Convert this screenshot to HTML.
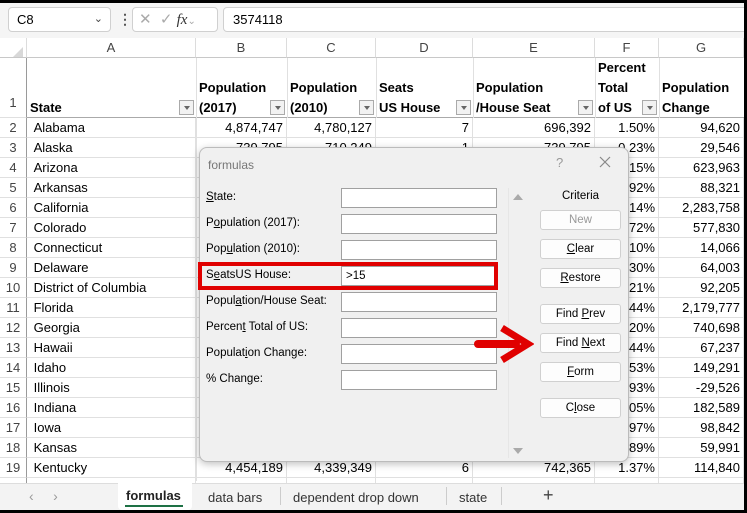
<!DOCTYPE html>
<html><head><meta charset="utf-8"><style>
*{box-sizing:border-box;margin:0;padding:0}
body{width:747px;height:513px;overflow:hidden;background:#000;font-family:"Liberation Sans",sans-serif;position:relative}
#w{position:absolute;left:0;top:3px;width:744px;height:507px;background:#fff;overflow:hidden}
.a{position:absolute}
.fb{left:0;top:0;width:744px;height:35px;background:#f5f5f5}
.box{background:#fff;border:1px solid #d0d0d0;border-radius:4px}
.ch{top:35px;height:20px;background:#fff;border-bottom:1px solid #c8c8c8;border-right:1px solid #dcdcdc;color:#444;font-size:13px;text-align:center;line-height:20px}
.rh{left:0;width:27px;text-align:center;color:#444;font-size:13px;border-bottom:1px solid #e0e0e0;border-right:1px solid #9a9a9a}
.row{position:absolute;left:27px;height:20px;width:717px;border-bottom:1px solid #e0e0e0;font-size:13px;line-height:20px}
.row span{position:absolute;top:0;height:20px;border-right:1px solid #e0e0e0;padding:0 3px;white-space:nowrap;overflow:hidden}
.r{text-align:right}
.hd{position:absolute;font-weight:bold;font-size:13px;line-height:20px;color:#000}
.dd{position:absolute;width:15px;height:15px;border:1px solid #aaa;background:#f2f2f2}
.dd:after{content:"";position:absolute;left:4px;top:5px;border-left:3px solid transparent;border-right:3px solid transparent;border-top:4px solid #666}
.dlg{left:199px;top:144px;width:430px;height:315px;background:#f0f0f0;border:1px solid #bbb;border-radius:8px;box-shadow:0 2px 8px rgba(0,0,0,.25);font-size:11.5px;color:#000}
.lb{position:absolute;left:6px}
.tb{position:absolute;left:141px;width:156px;height:20px;background:#fff;border:1px solid #a0a0a0}
.bt{position:absolute;left:340px;width:81px;height:20px;background:#fdfdfd;border:1px solid #d0d0d0;border-radius:3px;text-align:center;line-height:18px}
u{text-decoration:underline}
</style></head><body><div id="w">
<div class="a fb"></div>
<div class="a box" style="left:8px;top:4px;width:103px;height:25px;font-size:13px;line-height:23px;padding-left:8px">C8<span style="position:absolute;right:7px;color:#444;font-size:11px">&#8964;</span></div>
<div class="a" style="left:118px;top:8px;color:#555;font-size:14px;font-weight:bold">⋮</div>
<div class="a box" style="left:132px;top:4px;width:86px;height:25px;color:#aaa;font-size:15px;line-height:23px;padding-left:6px">✕ &nbsp;✓ <i style="color:#333;font-family:'Liberation Serif',serif">fx</i><span style="font-size:10px">&#8964;</span></div>
<div class="a box" style="left:223px;top:4px;width:530px;height:25px;font-size:13px;line-height:23px;padding-left:9px">3574118</div>
<div class="a ch" style="left:0;width:27px;background:#fff"></div>
<div class="a" style="left:13px;top:44px;border-left:10px solid transparent;border-bottom:10px solid #d8d8d8"></div>
<div class="a ch" style="left:27px;width:169px">A</div>
<div class="a ch" style="left:196px;width:91px">B</div>
<div class="a ch" style="left:287px;width:89px">C</div>
<div class="a ch" style="left:376px;width:97px">D</div>
<div class="a ch" style="left:473px;width:122px">E</div>
<div class="a ch" style="left:595px;width:64px">F</div>
<div class="a ch" style="left:659px;width:85px">G</div>
<div class="a rh" style="top:55px;height:60px;line-height:90px">1</div>
<div class="a" style="left:27px;top:55px;width:717px;height:60px;border-bottom:1px solid #aaa"></div>
<div class="a" style="left:196px;top:55px;height:423px;border-left:1px solid #e0e0e0"></div>
<div class="a" style="left:287px;top:55px;height:60px;border-left:1px solid #e0e0e0"></div>
<div class="a" style="left:376px;top:55px;height:60px;border-left:1px solid #e0e0e0"></div>
<div class="a" style="left:473px;top:55px;height:60px;border-left:1px solid #e0e0e0"></div>
<div class="a" style="left:595px;top:55px;height:60px;border-left:1px solid #e0e0e0"></div>
<div class="a" style="left:659px;top:55px;height:60px;border-left:1px solid #e0e0e0"></div>
<div class="hd" style="left:30px;top:95px">State</div><div class="dd" style="left:179px;top:97px"></div>
<div class="hd" style="left:199px;top:75px">Population<br>(2017)</div><div class="dd" style="left:270px;top:97px"></div>
<div class="hd" style="left:290px;top:75px">Population<br>(2010)</div><div class="dd" style="left:359px;top:97px"></div>
<div class="hd" style="left:379px;top:75px">Seats<br>US House</div><div class="dd" style="left:456px;top:97px"></div>
<div class="hd" style="left:476px;top:75px">Population<br>/House Seat</div><div class="dd" style="left:578px;top:97px"></div>
<div class="hd" style="left:598px;top:55px">Percent<br>Total<br>of US</div><div class="dd" style="left:642px;top:97px"></div>
<div class="hd" style="left:662px;top:75px">Population<br>Change</div>
<div id="rows"></div>
<script>
var d=[["Alabama","4,874,747","4,780,127","7","696,392","1.50%","94,620"],["Alaska","739,795","710,249","1","739,795","0.23%","29,546"],["Arizona","","","","","2.15%","623,963"],["Arkansas","","","","","0.92%","88,321"],["California","","","","","12.14%","2,283,758"],["Colorado","","","","","1.72%","577,830"],["Connecticut","","","","","1.10%","14,066"],["Delaware","","","","","0.30%","64,003"],["District of Columbia","","","","","0.21%","92,205"],["Florida","","","","","6.44%","2,179,777"],["Georgia","","","","","3.20%","740,698"],["Hawaii","","","","","0.44%","67,237"],["Idaho","","","","","0.53%","149,291"],["Illinois","","","","","3.93%","-29,526"],["Indiana","","","","","2.05%","182,589"],["Iowa","","","","","0.97%","98,842"],["Kansas","","","","","0.89%","59,991"],["Kentucky","4,454,189","4,339,349","6","742,365","1.37%","114,840"],["","","","","","",""]];
var L=[0,169,260,349,446,568,632],W=[169,91,89,97,122,64,85],h="";
d.forEach(function(r,i){var t=115+i*20;h+='<div class="a rh" style="top:'+t+'px;height:20px;line-height:20px">'+(i<18?i+2:'')+'</div><div class="row" style="top:'+t+'px">';
r.forEach(function(c,j){h+='<span class="'+(j?'r':'')+'" style="left:'+L[j]+'px;width:'+W[j]+'px">'+(j?c:'&nbsp;'+c)+'</span>'});h+='</div>'});
document.getElementById('rows').innerHTML=h;
</script>
<div class="a dlg">
<div class="a" style="left:8px;top:10px;color:#777;font-size:12px">formulas</div>
<div class="a" style="left:356px;top:7px;color:#999;font-size:13px">?</div>
<svg class="a" style="left:399px;top:8px" width="12" height="12"><path d="M1 1L11 11M11 1L1 11" stroke="#888" stroke-width="1.2"/></svg>
<div class="lb" style="top:43px"><u>S</u>tate:</div><div class="tb" style="top:40px"></div>
<div class="lb" style="top:69px">P<u>o</u>pulation (2017):</div><div class="tb" style="top:66px"></div>
<div class="lb" style="top:95px">Pop<u>u</u>lation (2010):</div><div class="tb" style="top:92px"></div>
<div class="lb" style="top:121px">S<u>e</u>atsUS House:</div><div class="tb" style="top:118px;padding-left:4px;line-height:18px">&gt;15</div>
<div class="lb" style="top:147px">Popul<u>a</u>tion/House Seat:</div><div class="tb" style="top:144px"></div>
<div class="lb" style="top:173px">Percen<u>t</u> Total of US:</div><div class="tb" style="top:170px"></div>
<div class="lb" style="top:199px">Populat<u>i</u>on Change:</div><div class="tb" style="top:196px"></div>
<div class="lb" style="top:225px">% Chan<u>g</u>e:</div><div class="tb" style="top:222px"></div>
<div class="a" style="left:-2px;top:114px;width:300px;height:28px;border:4px solid #e00000"></div>
<div class="a" style="left:308px;top:40px;height:270px;border-left:1px solid #e6e6e6"></div>
<div class="a" style="left:313px;top:46px;border-left:5px solid transparent;border-right:5px solid transparent;border-bottom:6px solid #aaa"></div>
<div class="a" style="left:313px;top:300px;border-left:5px solid transparent;border-right:5px solid transparent;border-top:6px solid #aaa"></div>
<div class="a" style="left:340px;top:42px;width:81px;text-align:center">Criteria</div>
<div class="bt" style="top:62px;color:#999">New</div>
<div class="bt" style="top:91px"><u>C</u>lear</div>
<div class="bt" style="top:120px"><u>R</u>estore</div>
<div class="bt" style="top:156px">Find <u>P</u>rev</div>
<div class="bt" style="top:185px">Find <u>N</u>ext</div>
<div class="bt" style="top:214px"><u>F</u>orm</div>
<div class="bt" style="top:250px">C<u>l</u>ose</div>
<svg class="a" style="left:272px;top:176px" width="62" height="40"><path d="M6 20 H44" stroke="#e00000" stroke-width="8" stroke-linecap="round"/><path d="M30 4 L56 20 L30 36" fill="none" stroke="#e00000" stroke-width="7" stroke-linejoin="miter"/></svg>
</div>
<div class="a" style="left:0;top:480px;width:744px;height:27px;background:#f3f3f3;border-top:1px solid #ddd"></div>
<div class="a" style="left:29px;top:485px;color:#999;font-size:14px">‹ &nbsp;&nbsp;&nbsp; ›</div>
<div class="a" style="left:118px;top:480px;width:74px;height:27px;background:#fff;border-radius:0 0 4px 4px"></div>
<div class="a" style="left:126px;top:485px;font-size:13px;font-weight:bold;color:#222">formulas</div>
<div class="a" style="left:125px;top:502px;width:58px;height:2px;background:#1e7145"></div>
<div class="a" style="left:208px;top:487px;font-size:13px;color:#333">data bars</div>
<div class="a" style="left:280px;top:484px;height:18px;border-left:1px solid #ccc"></div>
<div class="a" style="left:293px;top:487px;font-size:13px;color:#333">dependent drop down</div>
<div class="a" style="left:446px;top:484px;height:18px;border-left:1px solid #ccc"></div>
<div class="a" style="left:459px;top:487px;font-size:13px;color:#333">state</div>
<div class="a" style="left:501px;top:484px;height:18px;border-left:1px solid #ccc"></div>
<div class="a" style="left:543px;top:482px;font-size:18px;color:#444">+</div>
</div></body></html>
